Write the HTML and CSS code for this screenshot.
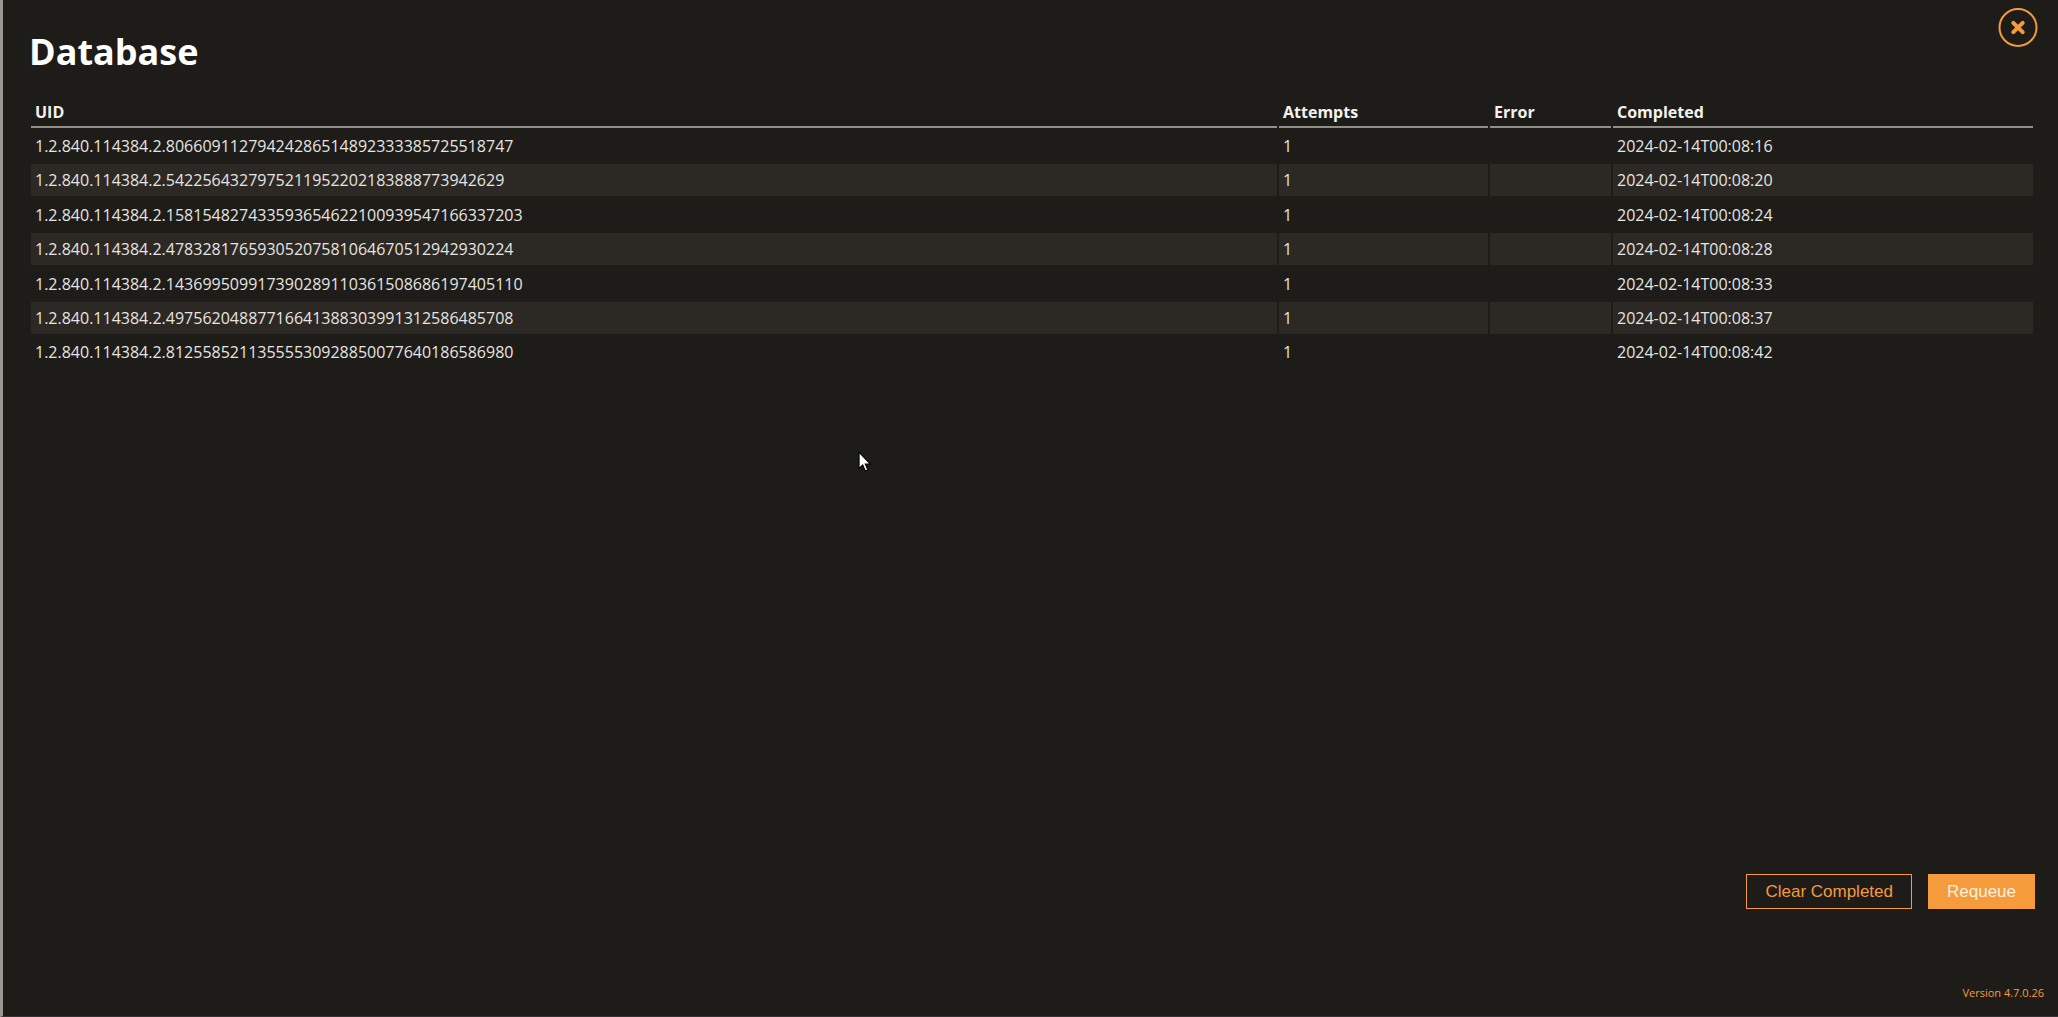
FILE: index.html
```
<!DOCTYPE html>
<html lang="en">
<head>
    <meta charset="UTF-8">
    <meta name="viewport" content="width=device-width, initial-scale=1.0">
    <title>Database</title>
    <link rel="stylesheet" href="styles.css">
</head>
<body>
    <div class="page">
        <header class="header">
            <h1>Database</h1>
            <button class="close" type="button" aria-label="Close">
                <svg width="40" height="40" viewBox="0 0 40 40">
                    <circle cx="20" cy="19.5" r="18.5"/>
                    <path d="M15.3 14.8 24.7 24.2M24.7 14.8 15.3 24.2"/>
                </svg>
            </button>
        </header>
        <main class="main">
            <table class="list">
                <thead>
                    <tr>
                        <th class="uid">UID</th>
                        <th class="attempts">Attempts</th>
                        <th class="error">Error</th>
                        <th class="completed">Completed</th>
                    </tr>
                </thead>
                <tbody>
                    <tr>
                        <td>1.2.840.114384.2.80660911279424286514892333385725518747</td>
                        <td>1</td>
                        <td></td>
                        <td>2024-02-14T00:08:16</td>
                    </tr>
                    <tr>
                        <td>1.2.840.114384.2.5422564327975211952202183888773942629</td>
                        <td>1</td>
                        <td></td>
                        <td>2024-02-14T00:08:20</td>
                    </tr>
                    <tr>
                        <td>1.2.840.114384.2.158154827433593654622100939547166337203</td>
                        <td>1</td>
                        <td></td>
                        <td>2024-02-14T00:08:24</td>
                    </tr>
                    <tr>
                        <td>1.2.840.114384.2.47832817659305207581064670512942930224</td>
                        <td>1</td>
                        <td></td>
                        <td>2024-02-14T00:08:28</td>
                    </tr>
                    <tr>
                        <td>1.2.840.114384.2.143699509917390289110361508686197405110</td>
                        <td>1</td>
                        <td></td>
                        <td>2024-02-14T00:08:33</td>
                    </tr>
                    <tr>
                        <td>1.2.840.114384.2.49756204887716641388303991312586485708</td>
                        <td>1</td>
                        <td></td>
                        <td>2024-02-14T00:08:37</td>
                    </tr>
                    <tr>
                        <td>1.2.840.114384.2.81255852113555530928850077640186586980</td>
                        <td>1</td>
                        <td></td>
                        <td>2024-02-14T00:08:42</td>
                    </tr>
                </tbody>
            </table>
        </main>
        <div class="actions">
            <button class="btn" type="button">Clear Completed</button>
            <button class="btn primary" type="button">Requeue</button>
        </div>
        <footer class="version">Version 4.7.0.26</footer>
    </div>
    <svg class="cursor" width="15" height="22" viewBox="0 0 14 20">
        <path d="M1 1V16L4.4 12.8 6.8 18.4 9.2 17.4 6.8 12H11.6Z"/>
    </svg>
</body>
</html>
```
FILE: styles.css
```
*{
    box-sizing: border-box;
}
body{
    margin: 0;
    background: #1d1c18;
    color: #e6e4e0;
    font-family: "Open Sans", "Noto Sans", sans-serif;
    font-size: 16px;
    line-height: 24px;
}
.page{
    display: flex;
    flex-direction: column;
    min-height: 100vh;
    border-left: 3px solid #9a9994;
    border-bottom: 1px solid #353338;
}
.header{
    display: flex;
    justify-content: space-between;
    align-items: flex-start;
    padding: 8px 20px 0 26px;
}
.header h1{
    margin: 16px 0 0;
    color: #fff;
    font-size: 36px;
    line-height: 56px;
}
.close{
    padding: 0;
    border: 0;
    background: none;
    cursor: pointer;
}
.close svg{
    display: block;
    fill: none;
    stroke: #f59b3c;
    stroke-width: 2;
}
.close path{
    stroke-width: 4;
    stroke-linecap: round;
}
.main{
    flex: 1;
    padding: 14px 23px 0 26px;
}
.list{
    width: 100%;
    table-layout: fixed;
    border-spacing: 2px;
}
.list th,
.list td{
    padding: 4px;
    text-align: left;
}
.list th{
    height: 32px;
    padding-bottom: 2px;
    border-bottom: 2px solid #8f8e88;
    color: #f4f2ee;
}
.list td{
    height: 32px;
}
/* rows 3 and 5 */
.list tbody tr:nth-child(2n+3):not(:last-child) td{
    height: 33px;
}
.list tbody tr:nth-child(even) td{
    background: #2c2824;
}
.list .attempts{
    width: 209px;
}
.list .error{
    width: 121px;
}
.list .completed{
    width: 420px;
}
.actions{
    display: flex;
    justify-content: flex-end;
    gap: 16px;
    padding: 0 23px;
}
.btn{
    height: 35px;
    padding: 0 18px;
    border: 1px solid #f59b3c;
    background: none;
    color: #f59b3c;
    font-family: "Liberation Sans", Arial, sans-serif;
    font-size: 17px;
    cursor: pointer;
}
.btn.primary{
    background: #f59b3c;
    color: #fff0e0;
}
.version{
    padding: 76px 14px 15px;
    color: #f59b3c;
    font-size: 11px;
    line-height: 16px;
    text-align: right;
}
/* mouse pointer lies over the page */
.cursor{
    position: absolute;
    left: 858px;
    top: 451px;
    fill: #fff;
    stroke: #000;
    stroke-width: 1;
    pointer-events: none;
}
```
